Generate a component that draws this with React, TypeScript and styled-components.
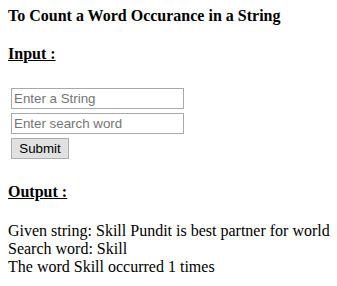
import * as React from 'react';
import styled, { createGlobalStyle } from 'styled-components';

const GlobalStyle = createGlobalStyle`
  html, body {
    margin: 0;
    padding: 0;
    background: #ffffff;
  }
  body {
    font-family: 'Liberation Serif', 'Times New Roman', serif;
    font-size: 16px;
    color: #000000;
  }
`;

const Page = styled.div`
  padding: 7px 8px 0;
`;

const Title = styled.h4`
  margin: 0;
  font-size: 16px;
  font-weight: bold;
  line-height: 18px;
  white-space: nowrap;
`;

interface HeadingProps {
  gap: number;
}

const SectionHeading = styled.h4<HeadingProps>`
  margin: ${({ gap }) => gap}px 0 0;
  font-size: 16px;
  font-weight: bold;
  line-height: 18px;
  text-decoration: underline;
`;

const Form = styled.form`
  display: flex;
  flex-direction: column;
  align-items: flex-start;
  gap: 4px;
  margin-top: 25px;
  padding-left: 3px;
`;

const TextInput = styled.input`
  box-sizing: border-box;
  width: 173px;
  height: 21px;
  margin: 0;
  padding: 1px 2px;
  border: 1px solid #a9a9a9;
  border-radius: 0;
  background: #ffffff;
  font-family: 'Liberation Sans', Arial, sans-serif;
  font-size: 13.33px;
  color: #000000;
  outline: none;

  &::placeholder {
    color: #757575;
    opacity: 1;
  }
`;

const SubmitButton = styled.button`
  box-sizing: border-box;
  width: 58px;
  height: 21px;
  margin: 0;
  padding: 0 6px;
  border: 1px solid #adadad;
  border-radius: 0;
  background: #e1e1e1;
  font-family: 'Liberation Sans', Arial, sans-serif;
  font-size: 13.33px;
  color: #000000;
  line-height: 19px;
`;

const Result = styled.div`
  margin-top: 21px;
  line-height: 18px;
  white-space: nowrap;
`;

const countWord = (text: string, word: string): number =>
  text.split(' ').filter((w) => w === word).length;

export default function App() {
  const given = 'Skill Pundit is best partner for world';
  const search = 'Skill';

  return (
    <Page>
      <GlobalStyle />
      <Title>To Count a Word Occurance in a String</Title>
      <SectionHeading gap={20}>Input :</SectionHeading>
      <Form onSubmit={(e) => e.preventDefault()}>
        <TextInput type="text" placeholder="Enter a String" />
        <TextInput type="text" placeholder="Enter search word" />
        <SubmitButton type="submit">Submit</SubmitButton>
      </Form>
      <SectionHeading gap={24}>Output :</SectionHeading>
      <Result>
        Given string: {given}
        <br />
        Search word: {search}
        <br />
        The word {search} occurred {countWord(given, search)} times
      </Result>
    </Page>
  );
}
